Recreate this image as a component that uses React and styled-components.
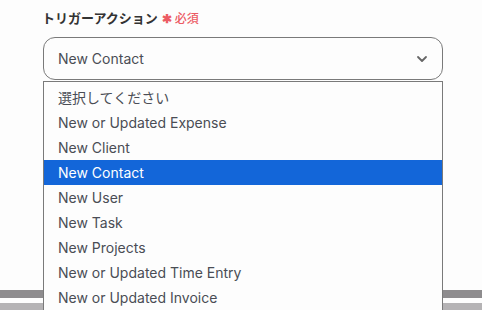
import styled, { createGlobalStyle } from "styled-components";

const GlobalStyle = createGlobalStyle`
  html, body {
    margin: 0;
    padding: 0;
    background: #fdfdfd;
    font-family: Inter, "Noto Sans CJK JP", sans-serif;
  }
`

const Page = styled.div`
  width: 482px;
  height: 310px;
  overflow: hidden;
  display: flex;
  flex-direction: column;
`

const Field = styled.div`
  padding: 10px 40px 0 43px;
  display: flex;
  flex-direction: column;
  gap: 10px;
`

const Label = styled.div`
  display: flex;
  align-items: center;
  gap: 4px;
  font-size: 13px;
  font-weight: 700;
  color: #333;
  line-height: 17px;
  margin-left: -1px;
`

const Required = styled.span`
  color: #ec5b64;
  font-size: 12px;
  font-weight: 500;
  display: flex;
  align-items: center;
  gap: 3px;
  .star { font-size: 12px; font-weight: 700; }
`

const SelectWrap = styled.div`
  position: relative;
  width: 400px;
`

const SelectBox = styled.div`
  height: 43px;
  box-sizing: border-box;
  border: 1px solid #7a7a7a;
  border-radius: 12px;
  display: flex;
  align-items: center;
  justify-content: space-between;
  padding: 0 14px 0 14px;
  font-size: 14px;
  color: #4a4d55;
  background: #fdfdfd;
`

const List = styled.ul`
  position: absolute;
  top: 44px;
  left: 0;
  width: 400px;
  box-sizing: border-box;
  margin: 0;
  padding: 3px 0 10px;
  list-style: none;
  border: 1px solid #7a7a7a;
  background: #fdfdfd;
  z-index: 2;
`

const Item = styled.li`
  height: 25px;
  line-height: 25px;
  padding-left: 14px;
  font-size: 14px;
  color: ${p => (p.$active ? "#fff" : "#4a4d55")};
  background: ${p => (p.$active ? "#1366d9" : "transparent")};
`

const Spacer = styled.div`
  flex: 1;
`

const Footer = styled.div`
  height: 20px;
  display: flex;
  flex-direction: column;
`

const FooterDark = styled.div`
  height: 8px;
  background: #8e8c8e;
`

const FooterGap = styled.div`
  height: 5px;
  background: #fdfdfd;
`

const FooterLight = styled.div`
  flex: 1;
  background: #b5b3b5;
`

const items = [
  "選択してください",
  "New or Updated Expense",
  "New Client",
  "New Contact",
  "New User",
  "New Task",
  "New Projects",
  "New or Updated Time Entry",
  "New or Updated Invoice",
]

export default function App() {
  return (
    <Page>
      <GlobalStyle />
      <Field>
        <Label>
          トリガーアクション
          <Required><span className="star">✱</span>必須</Required>
        </Label>
        <SelectWrap>
          <SelectBox>
            New Contact
            <svg width="12" height="8" viewBox="0 0 12 8">
              <path d="M2 2l4 4 4-4" fill="none" stroke="#666" strokeWidth="1.8" strokeLinecap="round" strokeLinejoin="round" />
            </svg>
          </SelectBox>
          <List>
            {items.map(it => (
              <Item key={it} $active={it === "New Contact"}>{it}</Item>
            ))}
          </List>
        </SelectWrap>
      </Field>
      <Spacer />
      <Footer>
        <FooterDark />
        <FooterGap />
        <FooterLight />
      </Footer>
    </Page>
  )
}
